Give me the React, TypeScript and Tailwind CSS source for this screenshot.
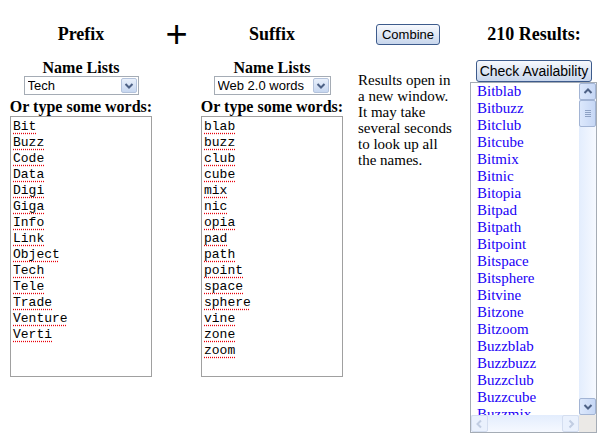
const prefixes = ["Bit", "Buzz", "Code", "Data", "Digi", "Giga", "Info", "Link", "Object", "Tech", "Tele", "Trade", "Venture", "Verti"];
const suffixes = ["blab", "buzz", "club", "cube", "mix", "nic", "opia", "pad", "path", "point", "space", "sphere", "vine", "zone", "zoom"];
const results = prefixes.flatMap((p) => suffixes.map((s) => p + s));

function Chevron({ dir, color = "#4d6185" }: { dir: "up" | "down" | "left" | "right"; color?: string }) {
  const d = {
    up: "M1.5 6L5 2.5L8.5 6",
    down: "M1.5 3L5 6.5L8.5 3",
    left: "M6 1.5L2.5 5L6 8.5",
    right: "M3.5 1.5L7 5L3.5 8.5",
  }[dir];
  return (
    <svg width="10" height="10" viewBox="0 0 10 10">
      <path d={d} fill="none" stroke={color} strokeWidth="2" />
    </svg>
  );
}

function NameSelect({ value, width }: { value: string; width: string }) {
  return (
    <div className={`relative mx-auto h-[19px] border border-[#a5acb5] bg-white ${width}`}>
      <select className="block h-[17px] w-full appearance-none bg-transparent py-0 pl-[3px] font-['Liberation_Sans',sans-serif] text-[13px] leading-[17px] text-black outline-none">
        <option>{value}</option>
      </select>
      <span className="pointer-events-none absolute top-px right-px bottom-px flex w-[16px] items-center justify-center rounded-[2px] border border-[#b4c3dc] bg-gradient-to-b from-[#e9f0fb] to-[#c7d7f0]">
        <Chevron dir="down" />
      </span>
    </div>
  );
}

function WordBox({ words }: { words: string[] }) {
  return (
    <div className="ml-[2px] h-[261px] w-[142px] border border-[#a0a0a0] bg-white px-[2px] pt-[2px] font-['Liberation_Mono',monospace] text-[13px] leading-[16px] text-black">
      {words.map((w) => (
        <div key={w}>
          <span className="underline decoration-red-600 decoration-dotted underline-offset-[3px]">{w}</span>
        </div>
      ))}
    </div>
  );
}

function Column({ title, list, width, words }: { title: string; list: string; width: string; words: string[] }) {
  return (
    <div className="flex w-[146px] flex-col">
      <div className="pt-px text-center text-[16px] leading-[16px] font-bold">Name Lists</div>
      <NameSelect value={list} width={width} />
      <div className="pt-[2px] text-center text-[16px] leading-[19px] font-bold whitespace-nowrap">{title}</div>
      <WordBox words={words} />
    </div>
  );
}

const btn =
  "rounded-[3px] border border-[#3d5b8c] bg-gradient-to-b from-[#f7f9fd] to-[#c8d6ec] font-['Liberation_Sans',sans-serif] leading-none text-black";

function ResultList() {
  return (
    <div className="flex h-[351px] w-[127px] flex-col border border-[#a5acb5] bg-white">
      <div className="flex min-h-0 flex-1">
        <div className="flex-1 overflow-hidden pl-[6px] text-[15px] leading-[17px] text-[#2000f6]">
          {results.slice(0, 20).map((r) => (
            <div key={r}>{r}</div>
          ))}
        </div>
        <div className="flex w-[17px] flex-col bg-gradient-to-r from-[#e3edfd] to-[#f6f9ff]">
          <div className="flex h-[17px] items-center justify-center rounded-[2px] border border-[#a2b4d4] bg-gradient-to-r from-[#dce8fc] to-[#c6d7f5]">
            <Chevron dir="up" />
          </div>
          <div className="flex h-[27px] items-center justify-center rounded-[2px] border border-[#a2b4d4] bg-gradient-to-r from-[#dce8fc] to-[#c6d7f5]">
            <div className="flex flex-col gap-[1px]">
              <span className="h-px w-[6px] bg-[#8ea2c4]" />
              <span className="h-px w-[6px] bg-[#8ea2c4]" />
              <span className="h-px w-[6px] bg-[#8ea2c4]" />
              <span className="h-px w-[6px] bg-[#8ea2c4]" />
            </div>
          </div>
          <div className="flex-1" />
          <div className="flex h-[17px] items-center justify-center rounded-[2px] border border-[#a2b4d4] bg-gradient-to-r from-[#dce8fc] to-[#c6d7f5]">
            <Chevron dir="down" />
          </div>
        </div>
      </div>
      <div className="flex h-[17px]">
        <div className="flex flex-1 bg-gradient-to-b from-[#e3edfd] to-[#f6f9ff]">
          <div className="flex w-[17px] items-center justify-center rounded-[2px] border border-[#d4def0] bg-[#eaf1fd]">
            <Chevron dir="left" color="#c1cde2" />
          </div>
          <div className="flex-1" />
          <div className="flex w-[17px] items-center justify-center rounded-[2px] border border-[#d4def0] bg-[#eaf1fd]">
            <Chevron dir="right" color="#c1cde2" />
          </div>
        </div>
        <div className="w-[17px] bg-[#ebe9e6]" />
      </div>
    </div>
  );
}

export default function App() {
  return (
    <div className="h-[447px] w-[603px] overflow-hidden bg-white pt-[23px] font-['Liberation_Serif',serif] text-black">
      {/* headings */}
      <div className="flex h-[22px] items-center pl-[8px]">
        <div className="w-[146px] text-center text-[18px] font-bold">Prefix</div>
        <div className="w-[45px] text-center font-['Liberation_Sans',sans-serif] text-[38px] leading-none">+</div>
        <div className="w-[146px] text-center text-[18px] font-bold">Suffix</div>
        <div className="ml-[13px] w-[112px] pl-[18px]">
          <button className={`${btn} h-[21px] w-[64px] text-[13px]`}>Combine</button>
        </div>
        <div className="w-[128px] text-center text-[18px] font-bold">210 Results:</div>
      </div>

      {/* body */}
      <div className="mt-[14px] flex pl-[8px]">
        <Column title="Or type some words:" list="Tech" width="w-[115px]" words={prefixes} />
        <div className="w-[45px]" />
        <Column title="Or type some words:" list="Web 2.0 words" width="w-[117px]" words={suffixes} />
        <div className="ml-[13px] w-[112px] pt-[13px] text-[15px] leading-[16px]">
          Results open in
          <br />a new window.
          <br />
          It may take
          <br />
          several seconds
          <br />
          to look up all
          <br />
          the names.
        </div>
        <div className="flex w-[128px] flex-col">
          <button className={`${btn} mt-px ml-[6px] h-[22px] w-[116px] text-[14px]`}>Check Availability</button>
          <ResultList />
        </div>
      </div>
    </div>
  );
}
